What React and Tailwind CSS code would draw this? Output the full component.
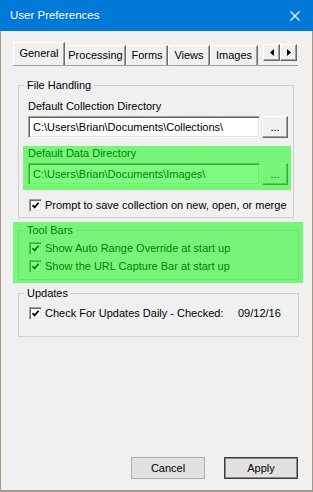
import React from 'react';

const tabs = [
  { label: 'General', w: 52, active: true },
  { label: 'Processing', w: 61 },
  { label: 'Forms', w: 42 },
  { label: 'Views', w: 42 },
  { label: 'Images', w: 48 },
];

function CheckBox() {
  return (
    <span className="w-[13px] h-[13px] shrink-0 bg-white border border-t-[#a0a0a0] border-l-[#a0a0a0] border-b-white border-r-white shadow-[inset_1px_1px_0_#696969,inset_-1px_-1px_0_#e3e3e3] flex items-center justify-center">
      <svg width="9" height="9" viewBox="0 0 9 9">
        <path d="M1.5 4.2 L3.6 6.4 L7.6 1.8" stroke="#000" strokeWidth="1.7" fill="none" />
      </svg>
    </span>
  );
}

function CheckRow({ children, className = '' }) {
  return (
    <div className={`flex items-center h-[13px] ml-[1px] gap-[3px] ${className}`}>
      <CheckBox />
      {children}
    </div>
  );
}

function PathInput({ value }) {
  return (
    <div className="flex gap-[2px]">
      <div className="w-[232px] h-[22px] bg-white flex items-center pl-[4px] border border-t-[#a0a0a0] border-l-[#a0a0a0] border-b-white border-r-white shadow-[inset_1px_1px_0_#696969,inset_-1px_-1px_0_#e3e3e3]">
        {value}
      </div>
      <button className="w-[26px] h-[22px] bg-[#f0f0f0] flex items-end justify-center pb-[4px] leading-none border border-t-white border-l-white border-b-[#696969] border-r-[#696969] shadow-[inset_-1px_-1px_0_#a0a0a0]">
        ...
      </button>
    </div>
  );
}

function Group({ title, className = '', children }) {
  return (
    <fieldset className={`border border-[#d0d0d0] pl-[9px] ${className}`}>
      <legend className="ml-[-4px] px-[3px] leading-[13px]">{title}</legend>
      {children}
    </fieldset>
  );
}

function Highlight() {
  return <div className="absolute pointer-events-none bg-[rgba(0,250,0,0.5)] inset-0" />;
}

export default function App() {
  return (
    <div className="w-[313px] h-[492px] flex flex-col bg-[#f0f0f0] text-[11px] text-black font-['Liberation_Sans',Arial,sans-serif]">
      {/* title bar */}
      <div className="h-[31px] shrink-0 bg-[#0078d7] text-white flex items-center justify-between pl-[10px] pr-[13px]">
        <span className="text-[11.5px] leading-none">User Preferences</span>
        <svg width="10" height="10" viewBox="0 0 10 10">
          <path d="M0.5 0.5 L9.5 9.5 M9.5 0.5 L0.5 9.5" stroke="#fff" strokeWidth="1.1" />
        </svg>
      </div>

      <div className="flex-1 flex flex-col border-x border-b-2 border-[#a99585]">
        {/* tabs */}
        <div className="ml-[12px] mr-[14px] mt-[11px] flex items-end h-[23px]">
          {tabs.map((t) => (
            <div
              key={t.label}
              style={{ width: t.w }}
              className={`flex items-center justify-center border-t border-l border-t-white border-l-white border-r border-r-[#696969] shadow-[inset_-1px_0_0_#a0a0a0] ${t.active ? 'h-[23px] pb-[2px]' : 'h-[20px]'}`}
            >
              {t.label}
            </div>
          ))}
          <div className="ml-[5px] mb-[4px] flex">
            {['M5 1 L1 4.5 L5 8 Z', 'M1 1 L5 4.5 L1 8 Z'].map((d) => (
              <div key={d} className="w-[17px] h-[17px] flex items-center justify-center border border-t-white border-l-white border-b-[#696969] border-r-[#696969] shadow-[inset_-1px_-1px_0_#a0a0a0]">
                <svg width="6" height="9" viewBox="0 0 6 9">
                  <path d={d} fill="#000" />
                </svg>
              </div>
            ))}
          </div>
        </div>

        {/* panel */}
        <div className="ml-[12px] mr-[14px] border-t border-[#a0a0a0]">
          <Group title="File Handling" className="ml-[5px] mt-[13px] w-[276px] pr-[5px] pb-[5px]">
            <div className="mt-[8px] leading-[13px]">Default Collection Directory</div>
            <div className="mt-[3px]">
              <PathInput value="C:\Users\Brian\Documents\Collections\" />
            </div>
            <div className="relative mt-[9px]">
              <div className="leading-[13px]">Default Data Directory</div>
              <div className="mt-[3px]">
                <PathInput value="C:\Users\Brian\Documents\Images\" />
              </div>
              <div className="absolute pointer-events-none bg-[rgba(0,250,0,0.5)] -left-[5px] -right-[3px] -top-[1px] -bottom-[5px]" />
            </div>
            <CheckRow className="mt-[14px]">
              <span>Prompt to save collection on new, open, or merge</span>
            </CheckRow>
          </Group>

          <div className="relative mt-[4px] w-[290px] pt-[2px] pb-[3px]">
            <Group title="Tool Bars" className="ml-[5px] w-[281px] pb-[6px]">
              <CheckRow className="mt-[5px]">
                <span>Show Auto Range Override at start up</span>
              </CheckRow>
              <CheckRow className="mt-[5px]">
                <span>Show the URL Capture Bar at start up</span>
              </CheckRow>
            </Group>
            <Highlight />
          </div>

          <Group title="Updates" className="ml-[5px] mt-[4px] w-[281px] pb-[16px]">
            <CheckRow className="mt-[7px]">
              <span className="w-[190px]">Check For Updates Daily - Checked:</span>
              <span>09/12/16</span>
            </CheckRow>
          </Group>
        </div>

        <div className="flex-1" />

        {/* footer buttons */}
        <div className="flex justify-end gap-[19px] pr-[14px] pb-[11px]">
          <button className="w-[74px] h-[22px] bg-[#e1e1e1] border border-[#adadad]">Cancel</button>
          <button className="w-[74px] h-[22px] bg-[#e1e1e1] border border-[#3c3c3c] shadow-[inset_0_0_0_1px_#8a8a8a]">Apply</button>
        </div>
      </div>
    </div>
  );
}
